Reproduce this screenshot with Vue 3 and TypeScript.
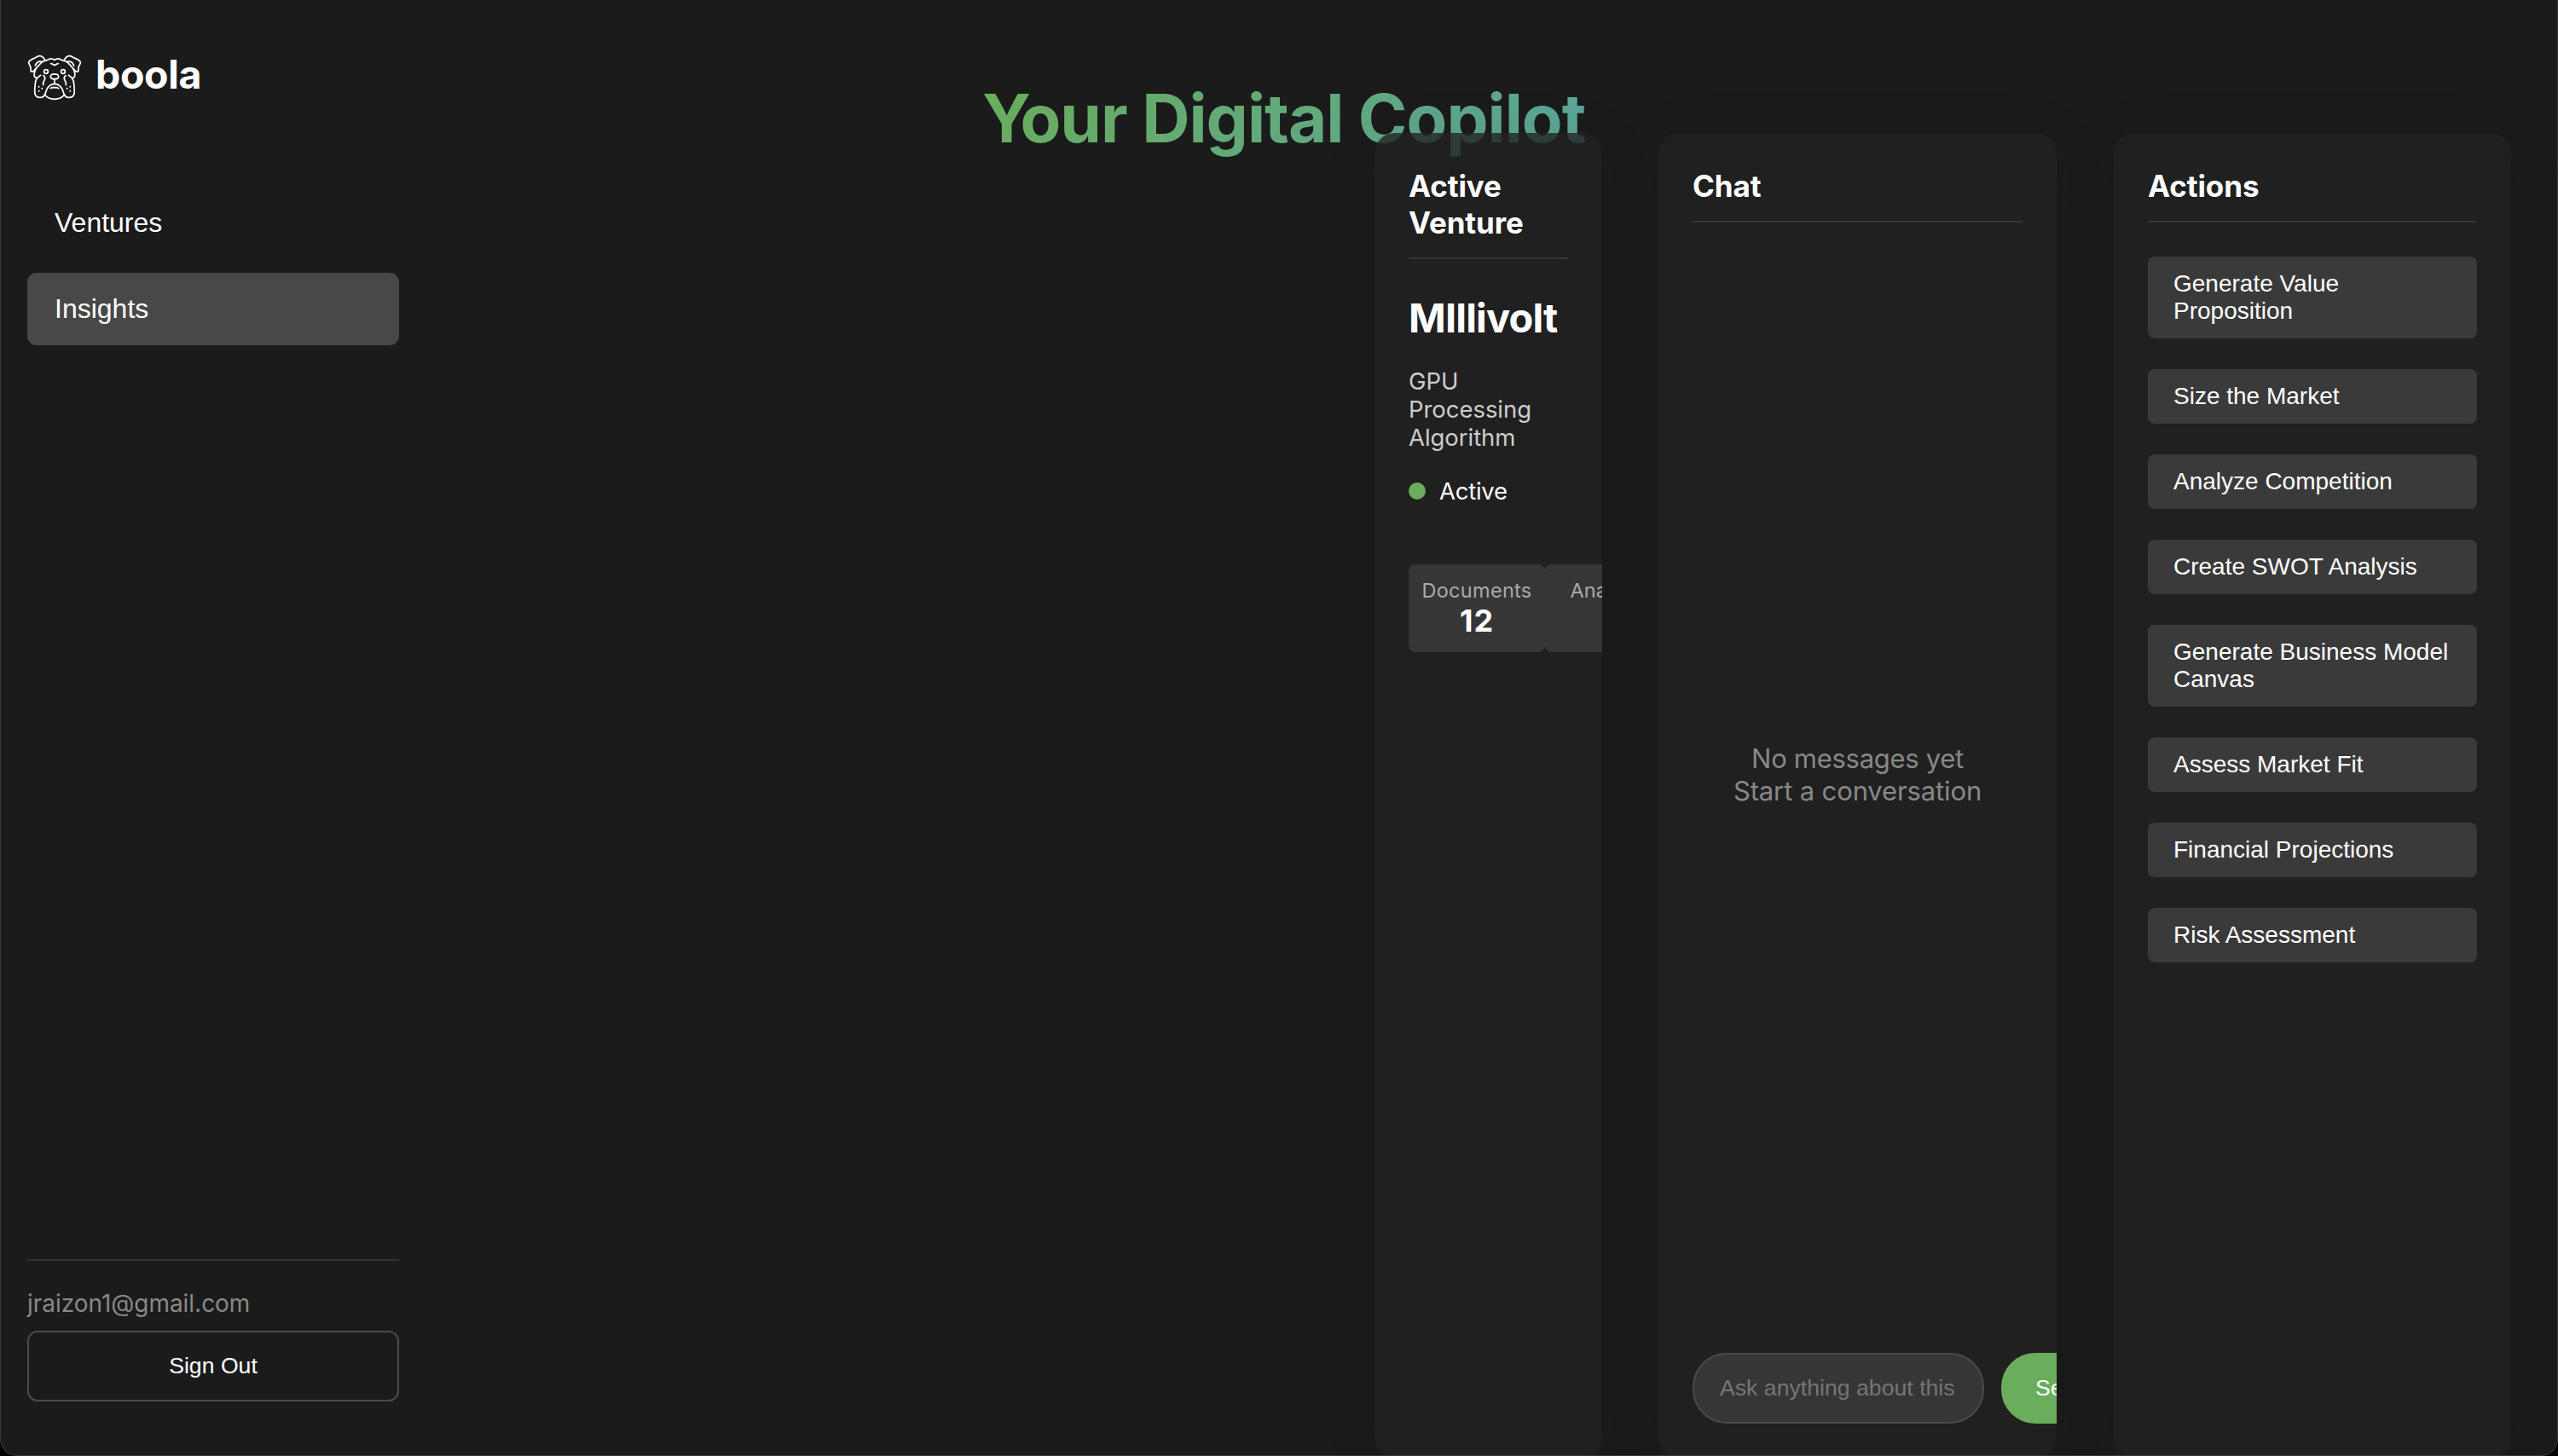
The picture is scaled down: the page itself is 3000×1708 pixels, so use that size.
<script setup lang="ts">
interface Stat {
  label: string
  value: number
}

const navItems: { label: string; active: boolean }[] = [
  { label: 'Ventures', active: false },
  { label: 'Insights', active: true },
]

const stats: Stat[] = [
  { label: 'Documents', value: 12 },
  { label: 'Analyses', value: 8 },
]

const actions: string[] = [
  'Generate Value Proposition',
  'Size the Market',
  'Analyze Competition',
  'Create SWOT Analysis',
  'Generate Business Model Canvas',
  'Assess Market Fit',
  'Financial Projections',
  'Risk Assessment',
]
</script>

<template>
  <div class="window">
    <aside class="sidebar">
      <div class="brand">
        <svg class="brand-icon" viewBox="96 57 192 192" aria-hidden="true">
          <defs>
            <g id="dog-half">
              <path d="M159 93C154 83 146 76 138 77C131 78 127 82 120 85C112 89 102 93 101 99C100 106 108 112 108 118C108 124 106 130 111 132C117 133 122 129 125 122" />
              <path d="M124 111C128 100 137 95 147 97" />
              <path d="M192 91C182 84 174 86 166 92C158 93 150 95 145 101C136 110 128 116 124 127C122 134 118 140 121 148C122 152 125 154 127 153" />
              <path d="M143 145C132 151 125 160 124 174C123 186 121 200 123 210C125 220 134 224 145 223C155 221 160 211 162 201C165 187 177 176 192 175" />
              <path d="M153 146C160 152 160 156 156 162C152 168 151 172 152 179" />
              <path d="M158 214C165 224 178 229 192 229" />
              <path d="M178 191C183 187 187 188 192 188" />
              <path d="M179 104C184 103 187 109 192 109" />
              <circle cx="162" cy="132" r="7" />
              <path d="M192 141C184 140 178 143 178 149C178 154 184 158 192 158" />
              <circle class="dot" cx="137" cy="185" r="3" />
              <circle class="dot" cx="148" cy="191" r="3" />
              <circle class="dot" cx="137" cy="200" r="3" />
            </g>
          </defs>
          <use href="#dog-half" />
          <use href="#dog-half" transform="matrix(-1 0 0 1 384 0)" />
          <path d="M192 158V174" />
        </svg>
        <span class="brand-name">boola</span>
      </div>

      <nav class="nav">
        <a v-for="item in navItems" :key="item.label" class="nav-item" :class="{ active: item.active }">{{ item.label }}</a>
      </nav>

      <footer class="account">
        <p class="email">jraizon1@gmail.com</p>
        <button class="sign-out" type="button">Sign Out</button>
      </footer>
    </aside>

    <main class="main">
      <header class="header">
        <h1 class="title">Your Digital Copilot</h1>
      </header>

      <div class="panels">
        <section class="panel venture">
          <h2 class="panel-title">Active Venture</h2>
          <h3 class="venture-name">MIllivolt</h3>
          <p class="venture-desc">GPU Processing Algorithm</p>
          <div class="status"><span class="status-dot"></span>Active</div>
          <div class="stats">
            <div v-for="stat in stats" :key="stat.label" class="stat">
              <span class="stat-label">{{ stat.label }}</span>
              <span class="stat-value">{{ stat.value }}</span>
            </div>
          </div>
        </section>

        <section class="panel chat">
          <h2 class="panel-title">Chat</h2>
          <div class="messages">
            <p>No messages yet</p>
            <p class="hint">Start a conversation</p>
          </div>
          <div class="composer">
            <input class="composer-input" type="text" placeholder="Ask anything about this" />
            <button class="send" type="button">Send</button>
          </div>
        </section>

        <section class="panel actions">
          <h2 class="panel-title">Actions</h2>
          <div class="action-list">
            <button v-for="action in actions" :key="action" class="action" type="button">{{ action }}</button>
          </div>
        </section>
      </div>
    </main>
  </div>
</template>

<style>
body {
  background: #000;
}
</style>

<style scoped>
.window {
  position: relative;
  display: flex;
  width: 3000px;
  height: 1708px;
  box-sizing: border-box;
  overflow: hidden;
  background: #1b1b1b;
  border-radius: 0 0 20px 20px;
  color: #fff;
  font-family: Inter, sans-serif;
}

/* hairline frame around the window */
.window::after {
  content: '';
  position: absolute;
  inset: 0;
  border: 1px solid #3a3a3a;
  border-top: 0;
  border-radius: 0 0 20px 20px;
  pointer-events: none;
}

h1,
h2,
h3,
p {
  margin: 0;
}

button,
input {
  box-sizing: border-box;
  margin: 0;
  font-family: "Liberation Sans", Arial, sans-serif;
}

.sidebar {
  display: flex;
  flex-direction: column;
  flex: none;
  width: 500px;
  padding: 59px 32px 64px;
  box-sizing: border-box;
}

.brand {
  display: flex;
  align-items: flex-start;
  gap: 16px;
  height: 64px;
}

.brand-icon {
  width: 64px;
  height: 64px;
  fill: none;
  stroke: #fff;
  stroke-width: 5.2;
  stroke-linecap: round;
  stroke-linejoin: round;
}

.brand-icon .dot {
  fill: #fff;
  stroke: none;
}

.brand-name {
  font-size: 46.5px;
  font-weight: 700;
  line-height: 56px;
  letter-spacing: -0.36px;
}

.nav {
  display: flex;
  flex-direction: column;
  gap: 16px;
  margin-top: 96px;
}

.nav-item {
  height: 85px;
  padding: 0 32px;
  border-radius: 11px;
  font: 32px/84px "Liberation Sans", Arial, sans-serif;
}

.nav-item.active {
  background: #484848;
}

.account {
  margin-top: auto;
  padding-top: 33px;
  border-top: 2px solid #333;
}

.email {
  color: #888;
  font-size: 28px;
  line-height: 34px;
  letter-spacing: -0.03px;
}

.sign-out {
  display: block;
  width: 100%;
  height: 83px;
  margin-top: 15px;
  background: transparent;
  border: 2px solid #4a4a4a;
  border-radius: 12px;
  color: #fff;
  font-size: 26.667px;
}

.main {
  flex: 1;
  min-width: 0;
}

.header {
  display: flex;
  align-items: flex-start;
  height: 156px;
  padding: 90.6px 0 0 652px;
  box-sizing: border-box;
}

.title {
  flex: none;
  background: linear-gradient(135deg, #6aad5a, #5aa59c);
  background-clip: text;
  -webkit-background-clip: text;
  color: transparent;
  font-size: 78px;
  font-weight: 700;
  line-height: 96px;
  letter-spacing: -1px;
  white-space: nowrap;
}

/* tucks the "o" under the arm of the "Y" */
.title::first-letter {
  letter-spacing: -12.5px;
}

.panels {
  display: flex;
  justify-content: flex-end;
  padding-right: 55px;
}

.panel {
  position: relative;
  display: flex;
  flex-direction: column;
  flex: none;
  width: 467px;
  height: 1554px;
  padding: 41px 40px 40px;
  box-sizing: border-box;
  overflow: hidden;
  background: rgba(34, 34, 34, 0.8);
  border-radius: 24px;
  box-shadow: 0 8px 64px rgba(0, 0, 0, 0.1);
}

.venture {
  width: 267px;
  margin-right: 66px;
}

.actions {
  width: 466px;
  margin-left: 67px;
}

.panel-title {
  padding-bottom: 19px;
  border-bottom: 2px solid #363636;
  font-size: 35px;
  font-weight: 700;
  line-height: 43px;
  letter-spacing: -0.1px;
}

.venture-name {
  margin-top: 40px;
  font-size: 47px;
  font-weight: 700;
  line-height: 57px;
  letter-spacing: -0.85px;
}

.venture-desc {
  margin-top: 30px;
  color: #ccc;
  font-size: 27.5px;
  line-height: 33px;
  letter-spacing: -0.05px;
}

.status {
  display: flex;
  align-items: center;
  gap: 16px;
  margin-top: 29px;
  font-size: 27.5px;
  line-height: 34px;
  letter-spacing: -0.25px;
}

.status-dot {
  width: 20px;
  height: 20px;
  border-radius: 50%;
  background: #6aad5c;
}

.stats {
  display: flex;
  margin-top: 69px;
}

.stat {
  display: flex;
  flex-direction: column;
  flex: none;
  align-items: center;
  width: 160px;
  padding: 16px 0 15px;
  box-sizing: border-box;
  background: #363636;
  border-radius: 8px;
}

.stat-label {
  color: #aaa;
  font-size: 23.5px;
  line-height: 29px;
  letter-spacing: 0.3px;
}

.stat:last-child .stat-label {
  letter-spacing: 0;
}

.stat-value {
  font-size: 36px;
  font-weight: 700;
  line-height: 43px;
  letter-spacing: 1px;
}

.messages {
  display: flex;
  flex: 1;
  flex-direction: column;
  align-items: center;
  justify-content: center;
  margin: 40px 0 70px;
  color: #888;
  font-size: 31px;
  line-height: 38px;
  letter-spacing: -0.29px;
}

.hint {
  letter-spacing: -0.13px;
}

.composer {
  display: flex;
  gap: 20px;
  height: 83px;
}

.composer-input {
  flex: none;
  width: 342px;
  padding: 0 30px;
  background: #363636;
  border: 2px solid #4a4a4a;
  border-radius: 40px;
  color: #fff;
  font-size: 26.667px;
}

.composer-input::placeholder {
  color: #757575;
  opacity: 1;
}

.send {
  flex: none;
  padding: 0 40px;
  background: #6aad5c;
  border: 0;
  border-radius: 40px;
  color: #fff;
  font-size: 26.667px;
}

.action-list {
  display: flex;
  flex-direction: column;
  gap: 36px;
  margin-top: 40px;
}

.action {
  padding: 16px 30px;
  background: #3a3a3a;
  border: 0;
  border-radius: 8px;
  color: #fff;
  font-size: 28px;
  line-height: 32px;
  text-align: left;
}
</style>
